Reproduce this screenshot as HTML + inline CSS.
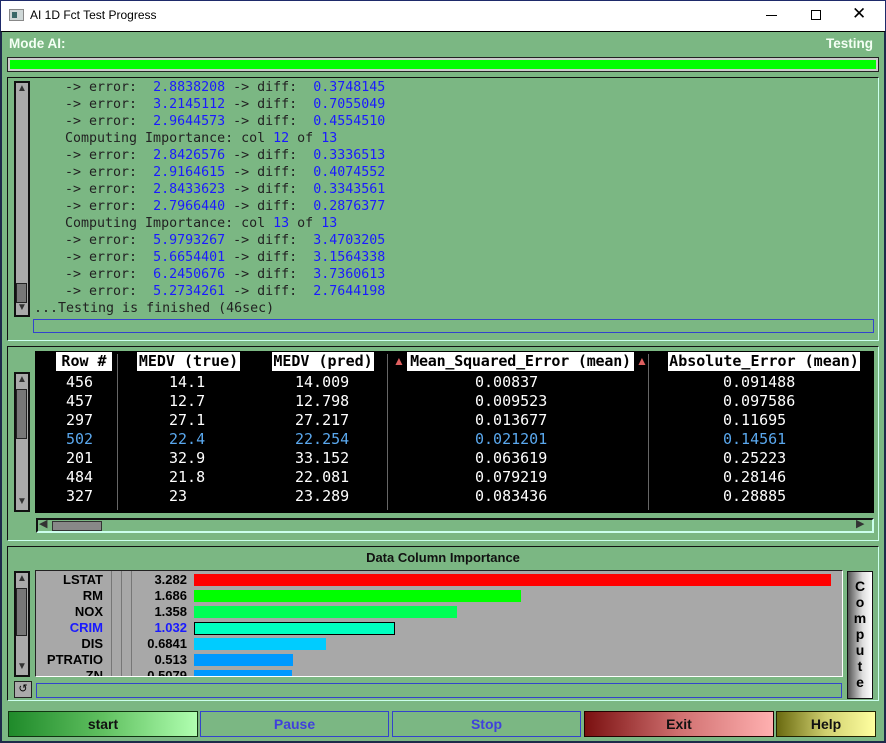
<!DOCTYPE html>
<html><head><style>
*{margin:0;padding:0;box-sizing:border-box}
body{width:886px;height:743px;overflow:hidden;background:#7bb783;position:relative;font-family:"Liberation Sans",sans-serif}
.a{position:absolute}
.mono{font-family:"DejaVu Sans Mono","Liberation Mono",monospace;font-size:13.3px}
.log div{height:17px;line-height:17px;white-space:pre;color:#222}
.b{color:#1a1aff}
.tb{font-family:"DejaVu Sans Mono","Liberation Mono",monospace;font-size:15px}
.row div{position:absolute;height:19px;line-height:19px;color:#fff;white-space:pre}
.hl{color:#5aa8ee!important}
.hdr{position:absolute;background:#fff;color:#000;font-weight:bold;height:19px;line-height:19px;top:352px;padding:0 1px}
.sep{position:absolute;top:354px;width:1px;height:156px;background:#666}
.sb{position:absolute;background:#aaa;border:2px solid #111}
.imp div{position:absolute;font-weight:bold;font-size:13px;height:16px;line-height:16px}
.btn{position:absolute;top:711px;height:26px;line-height:24px;text-align:center;font-weight:bold;font-size:14px}
</style></head><body>
<div class="a" style="left:0;top:0;width:886px;height:31px;background:#fff;border:1px solid #1e2a6a;border-bottom:none"></div>
<div class="a" style="left:9px;top:9px;width:15px;height:12px;border:1px solid #888;background:#cfd8d8"><div class="a" style="left:2px;top:2px;width:5px;height:6px;background:#3a6a6a"></div></div>
<div class="a" style="left:30px;top:8px;font-size:12px;color:#000">AI 1D Fct Test Progress</div>
<div class="a" style="left:766px;top:15px;width:11px;height:1px;background:#000"></div>
<div class="a" style="left:811px;top:10px;width:10px;height:10px;border:1px solid #000"></div>
<div class="a" style="left:852px;top:4px;font-size:17px;color:#000">✕</div>
<div class="a" style="left:0;top:31px;width:886px;height:712px;border:2px solid #1e2a4a;border-top:1px solid #000"></div>
<div class="a" style="left:9px;top:36px;color:#f4fff4;font-weight:bold;font-size:13.5px">Mode AI:</div>
<div class="a" style="left:826px;top:36px;color:#f4fff4;font-weight:bold;font-size:13.5px">Testing</div>
<div class="a" style="left:7px;top:57px;width:872px;height:15px;border:1px solid #222;background:#ccc;padding:2px"><div style="width:100%;height:100%;background:#00ff00"></div></div>
<div class="a" style="left:7px;top:77px;width:872px;height:264px;border:1px solid #111;border-right-color:#cfe;border-bottom-color:#cfe"></div>
<div class="sb" style="left:14px;top:81px;width:16px;height:236px"></div>
<div class="a" style="left:17px;top:83px;font-size:10px;color:#333">▲</div>
<div class="a" style="left:16px;top:283px;width:11px;height:20px;background:#777;border:1px solid #222"></div>
<div class="a" style="left:17px;top:302px;font-size:10px;color:#333">▼</div>
<div class="a log mono" style="left:65px;top:79px">
<div>-&gt; error:  <span class="b">2.8838208</span> -&gt; diff:  <span class="b">0.3748145</span></div>
<div>-&gt; error:  <span class="b">3.2145112</span> -&gt; diff:  <span class="b">0.7055049</span></div>
<div>-&gt; error:  <span class="b">2.9644573</span> -&gt; diff:  <span class="b">0.4554510</span></div>
<div>Computing Importance: col <span class="b">12</span> of <span class="b">13</span></div>
<div>-&gt; error:  <span class="b">2.8426576</span> -&gt; diff:  <span class="b">0.3336513</span></div>
<div>-&gt; error:  <span class="b">2.9164615</span> -&gt; diff:  <span class="b">0.4074552</span></div>
<div>-&gt; error:  <span class="b">2.8433623</span> -&gt; diff:  <span class="b">0.3343561</span></div>
<div>-&gt; error:  <span class="b">2.7966440</span> -&gt; diff:  <span class="b">0.2876377</span></div>
<div>Computing Importance: col <span class="b">13</span> of <span class="b">13</span></div>
<div>-&gt; error:  <span class="b">5.9793267</span> -&gt; diff:  <span class="b">3.4703205</span></div>
<div>-&gt; error:  <span class="b">5.6654401</span> -&gt; diff:  <span class="b">3.1564338</span></div>
<div>-&gt; error:  <span class="b">6.2450676</span> -&gt; diff:  <span class="b">3.7360613</span></div>
<div>-&gt; error:  <span class="b">5.2734261</span> -&gt; diff:  <span class="b">2.7644198</span></div>
</div>
<div class="a log mono" style="left:34px;top:300px"><div>...Testing is finished (46sec)</div></div>
<div class="a" style="left:33px;top:319px;width:841px;height:14px;border:1px solid #3344cc"></div>
<div class="a" style="left:7px;top:346px;width:872px;height:195px;border:1px solid #111;border-right-color:#cfe;border-bottom-color:#cfe"></div>
<div class="a" style="left:35px;top:351px;width:839px;height:162px;background:#000"></div>
<div class="sb" style="left:14px;top:372px;width:16px;height:140px"></div>
<div class="a" style="left:17px;top:374px;font-size:10px;color:#333">▲</div>
<div class="a" style="left:16px;top:389px;width:11px;height:50px;background:#777;border:1px solid #222"></div>
<div class="a" style="left:17px;top:496px;font-size:10px;color:#333">▼</div>
<div class="sep" style="left:117px"></div><div class="sep" style="left:387px"></div><div class="sep" style="left:648px"></div>
<div class="hdr tb" style="left:56px;width:56px;text-align:center">Row #</div>
<div class="hdr tb" style="left:137px;width:103px;text-align:center">MEDV (true)</div>
<div class="hdr tb" style="left:272px;width:102px;text-align:center">MEDV (pred)</div>
<div class="a" style="left:393px;top:354px;color:#e06060;font-size:12px">▲</div>
<div class="hdr tb" style="left:407px;width:227px;text-align:center;letter-spacing:-0.2px">Mean_Squared_Error (mean)</div>
<div class="a" style="left:636px;top:354px;color:#e06060;font-size:12px">▲</div>
<div class="hdr tb" style="left:668px;width:192px;text-align:center">Absolute_Error (mean)</div>
<div class="a row tb" style="left:0;top:373px;width:886px">
<div style="left:66px;top:0">456</div><div style="left:169px;top:0">14.1</div><div style="left:295px;top:0">14.009</div><div style="left:475px;top:0">0.00837</div><div style="left:723px;top:0">0.091488</div>
<div style="left:66px;top:19px">457</div><div style="left:169px;top:19px">12.7</div><div style="left:295px;top:19px">12.798</div><div style="left:475px;top:19px">0.009523</div><div style="left:723px;top:19px">0.097586</div>
<div style="left:66px;top:38px">297</div><div style="left:169px;top:38px">27.1</div><div style="left:295px;top:38px">27.217</div><div style="left:475px;top:38px">0.013677</div><div style="left:723px;top:38px">0.11695</div>
<div class="hl" style="left:66px;top:57px">502</div><div class="hl" style="left:169px;top:57px">22.4</div><div class="hl" style="left:295px;top:57px">22.254</div><div class="hl" style="left:475px;top:57px">0.021201</div><div class="hl" style="left:723px;top:57px">0.14561</div>
<div style="left:66px;top:76px">201</div><div style="left:169px;top:76px">32.9</div><div style="left:295px;top:76px">33.152</div><div style="left:475px;top:76px">0.063619</div><div style="left:723px;top:76px">0.25223</div>
<div style="left:66px;top:95px">484</div><div style="left:169px;top:95px">21.8</div><div style="left:295px;top:95px">22.081</div><div style="left:475px;top:95px">0.079219</div><div style="left:723px;top:95px">0.28146</div>
<div style="left:66px;top:114px">327</div><div style="left:169px;top:114px">23</div><div style="left:295px;top:114px">23.289</div><div style="left:475px;top:114px">0.083436</div><div style="left:723px;top:114px">0.28885</div>
</div>
<div class="a" style="left:36px;top:518px;width:838px;height:15px;border:2px solid #111;border-right-color:#cfe;border-bottom-color:#cfe"></div>
<div class="a" style="left:52px;top:521px;width:50px;height:10px;background:#888;border:1px solid #333"></div>
<div class="a" style="left:39px;top:517px;font-size:11px;color:#333">◀</div>
<div class="a" style="left:856px;top:517px;font-size:11px;color:#333">▶</div>
<div class="a" style="left:7px;top:546px;width:872px;height:155px;border:1px solid #111;border-right-color:#cfe;border-bottom-color:#cfe"></div>
<div class="a" style="left:0;top:550px;width:886px;text-align:center;font-weight:bold;font-size:13px;color:#111">Data Column Importance</div>
<div class="a" style="left:35px;top:570px;width:808px;height:107px;background:#a8a8a8;border:1px solid #222;border-right-color:#fff;border-bottom-color:#fff;overflow:hidden">
<div class="a" style="left:75px;top:0;width:1px;height:107px;background:#777"></div>
<div class="a" style="left:85px;top:0;width:1px;height:107px;background:#777"></div>
<div class="a" style="left:95px;top:0;width:1px;height:107px;background:#777"></div>
<div class="imp">
<div style="right:739px;top:1px">LSTAT</div><div style="right:655px;top:1px">3.282</div>
<div style="right:739px;top:17px">RM</div><div style="right:655px;top:17px">1.686</div>
<div style="right:739px;top:33px">NOX</div><div style="right:655px;top:33px">1.358</div>
<div style="right:739px;top:49px;color:#1a1aff">CRIM</div><div style="right:655px;top:49px;color:#1a1aff">1.032</div>
<div style="right:739px;top:65px">DIS</div><div style="right:655px;top:65px">0.6841</div>
<div style="right:739px;top:81px">PTRATIO</div><div style="right:655px;top:81px">0.513</div>
<div style="right:739px;top:97px">ZN</div><div style="right:655px;top:97px">0.5079</div>
</div>
<div class="a" style="left:158px;top:3px;width:637px;height:12px;background:#ff0000"></div>
<div class="a" style="left:158px;top:19px;width:327px;height:12px;background:#00ff00"></div>
<div class="a" style="left:158px;top:35px;width:263px;height:12px;background:#00ff55"></div>
<div class="a" style="left:158px;top:51px;width:201px;height:13px;background:#00ffc0;border:1px solid #000"></div>
<div class="a" style="left:158px;top:67px;width:132px;height:12px;background:#00ccff"></div>
<div class="a" style="left:158px;top:83px;width:99px;height:12px;background:#0099ff"></div>
<div class="a" style="left:158px;top:99px;width:98px;height:12px;background:#0099ff"></div>
</div>
<div class="sb" style="left:14px;top:571px;width:16px;height:106px"></div>
<div class="a" style="left:17px;top:573px;font-size:10px;color:#333">▲</div>
<div class="a" style="left:16px;top:588px;width:11px;height:48px;background:#777;border:1px solid #222"></div>
<div class="a" style="left:17px;top:661px;font-size:10px;color:#333">▼</div>
<div class="a" style="left:14px;top:681px;width:18px;height:17px;background:#aaa;border:1px solid #222;font-size:11px;text-align:center;line-height:15px">↺</div>
<div class="a" style="left:36px;top:683px;width:806px;height:15px;border:1px solid #3344cc"></div>
<div class="a" style="left:847px;top:571px;width:26px;height:128px;border:1px solid #111;background:linear-gradient(90deg,#555,#ddd 60%,#fff);font-weight:bold;font-size:14px;text-align:center;line-height:16px;padding-top:6px;color:#000">C<br>o<br>m<br>p<br>u<br>t<br>e</div>
<div class="btn" style="left:8px;width:190px;border:1px solid #113311;background:linear-gradient(90deg,#1f8a2a,#60c060 50%,#b0ffb0);color:#111">start</div>
<div class="btn" style="left:200px;width:189px;border:1px solid #3344cc;color:#4040dd">Pause</div>
<div class="btn" style="left:392px;width:189px;border:1px solid #3344cc;color:#4040dd">Stop</div>
<div class="btn" style="left:584px;width:190px;border:1px solid #220000;background:linear-gradient(90deg,#7a1010,#d07070 50%,#ffb0b0);color:#111">Exit</div>
<div class="btn" style="left:776px;width:100px;border:1px solid #222200;background:linear-gradient(90deg,#6a6a10,#d0d070 50%,#ffffa0);color:#111">Help</div>
</body></html>
